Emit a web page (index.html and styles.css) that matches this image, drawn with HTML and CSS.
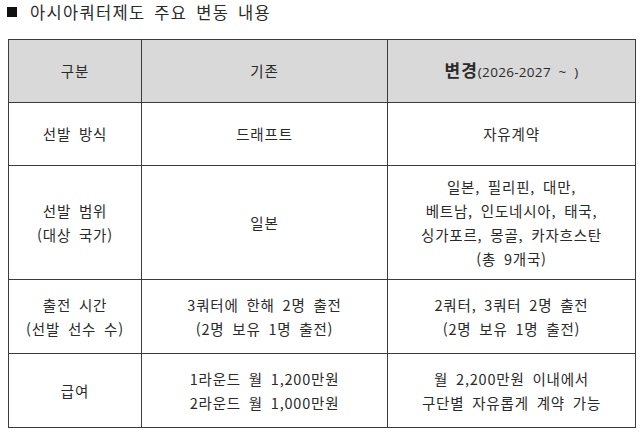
FILE: index.html
```html
<!DOCTYPE html>
<html lang="ko">
<head>
<meta charset="utf-8">
<link rel="stylesheet" href="styles.css">
</head>
<body>
<h1 class="title"><span class="bullet"></span>아시아쿼터제도 주요 변동 내용</h1>
<table class="cmp">
  <colgroup>
    <col class="c1"><col class="c2"><col class="c3">
  </colgroup>
  <thead>
    <tr class="head">
      <th>구분</th>
      <th>기존</th>
      <th><b class="big">변경</b><span class="range">(2026-2027&nbsp; ~&nbsp; )</span></th>
    </tr>
  </thead>
  <tbody>
    <tr class="r1">
      <td>선발 방식</td>
      <td>드래프트</td>
      <td>자유계약</td>
    </tr>
    <tr class="r2">
      <td>선발 범위<br>(대상 국가)</td>
      <td>일본</td>
      <td>일본, 필리핀, 대만,<br>베트남, 인도네시아, 태국,<br>싱가포르, 몽골, 카자흐스탄<br>(총 9개국)</td>
    </tr>
    <tr class="r3">
      <td>출전 시간<br>(선발 선수 수)</td>
      <td>3쿼터에 한해 2명 출전<br>(2명 보유 1명 출전)</td>
      <td>2쿼터, 3쿼터 2명 출전<br>(2명 보유 1명 출전)</td>
    </tr>
    <tr class="r4">
      <td>급여</td>
      <td>1라운드 월 1,200만원<br>2라운드 월 1,000만원</td>
      <td>월 2,200만원 이내에서<br>구단별 자유롭게 계약 가능</td>
    </tr>
  </tbody>
</table>
</body>
</html>
```
FILE: styles.css
```css
html, body {
  margin: 0;
  padding: 0;
  background: #ffffff;
}
body {
  padding: 0 6px 0 8px;
  font-family: "Noto Sans CJK KR", "Noto Sans", sans-serif;
  color: #2a2a2a;
}
.title {
  margin: 0;
  display: flex;
  align-items: center;
  height: 23px;
  font-size: 16.5px;
  font-weight: normal;
  letter-spacing: 1.3px;
  word-spacing: 3px;
  color: #2a2a2a;
}
.bullet {
  display: inline-block;
  width: 10px;
  height: 10px;
  background: #111111;
  margin-right: 13px;
  margin-left: -1px;
}
.cmp {
  margin-top: 16px;
  border-collapse: collapse;
  table-layout: fixed;
  width: 627px;
  font-size: 14.5px;
  line-height: 24px;
  letter-spacing: 0.8px;
  word-spacing: 3px;
}
.c1 { width: 133px; }
.c2 { width: 246px; }
.c3 { width: 248px; }
.cmp th, .cmp td {
  border: 1px solid #3c3c3c;
  text-align: center;
  vertical-align: middle;
  padding: 0;
  font-weight: normal;
}
.head th {
  background: #d9d9d9;
  height: 62px;
}
.big {
  font-weight: bold;
  font-size: 17px;
  letter-spacing: 1px;
}
.range {
  font-family: "Open Sans", "Noto Sans CJK KR", sans-serif;
  font-size: 13.5px;
  letter-spacing: 0.3px;
  word-spacing: 0;
}
.r1 td { height: 62px; }
.r2 td { height: 113px; }
.r3 td { height: 73px; }
.r4 td { height: 73px; }
```
